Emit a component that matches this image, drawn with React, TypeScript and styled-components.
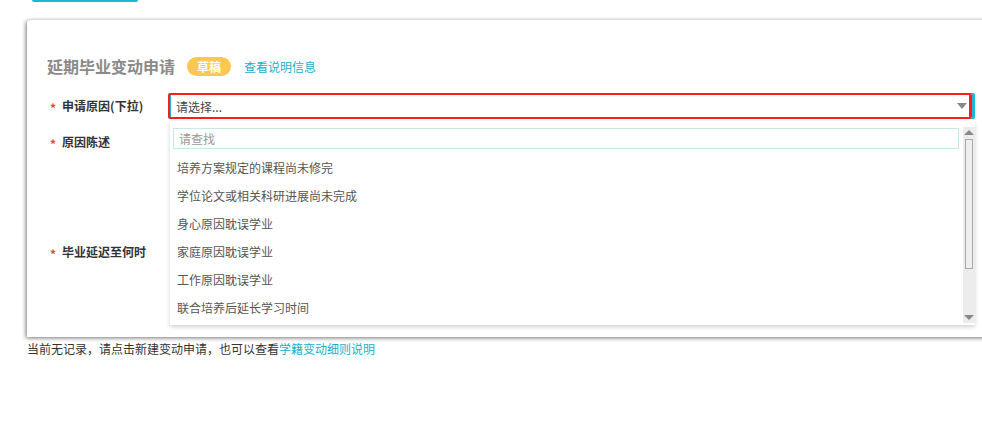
import React from 'react';
import styled, { createGlobalStyle } from 'styled-components';

const GlobalStyle = createGlobalStyle`
    html, body {
        margin: 0;
        padding: 0;
        background: #fff;
        overflow: hidden;
    }
    body {
        font-family: "Microsoft YaHei", "Noto Sans CJK SC", "Liberation Sans", sans-serif;
        font-size: 12px;
        color: #333;
    }
`;

const Page = styled.div`
    width: 982px;
    height: 446px;
    overflow: hidden;
`;

const TopButtonRow = styled.div`
    height: 2px;
    padding-left: 32px;
    overflow: hidden;
    display: flex;
    align-items: flex-end;
`;

const TopButton = styled.div`
    width: 106px;
    height: 30px;
    flex-shrink: 0;
    background: #18b7d3;
    border-radius: 0 0 2px 2px;
`;

const Card = styled.div`
    margin: 18px 0 0 27px;
    width: 1000px;
    background: #fff;
    border-radius: 3px 0 0 0;
    box-shadow: -1px 1px 4px rgba(0, 0, 0, 0.55);
    padding: 36px 0 72px 20px;
    box-sizing: border-box;
`;

const TitleRow = styled.div`
    display: flex;
    align-items: center;
    height: 20px;
`;

const Title = styled.h2`
    margin: 0;
    font-size: 16px;
    font-weight: bold;
    color: #8a8a8a;
    line-height: 20px;
`;

const Badge = styled.span`
    margin-left: 12px;
    width: 44px;
    height: 19px;
    border-radius: 10px;
    background: #fdc751;
    color: #fff;
    font-weight: bold;
    font-size: 12px;
    display: flex;
    align-items: center;
    justify-content: center;
`;

const Link = styled.a`
    color: #17b0cf;
    text-decoration: none;
    font-size: 12px;
`;

const TitleLink = styled(Link)`
    margin-left: 13px;
`;

const Form = styled.div`
    margin-top: 17px;
    display: flex;
    flex-direction: column;
    gap: 10px;
`;

const Row = styled.div<{ $h: number }>`
    display: flex;
    align-items: flex-start;
    height: ${p => p.$h}px;
    position: relative;
`;

const Label = styled.div`
    width: 121px;
    flex-shrink: 0;
    line-height: 26px;
    font-weight: bold;
    color: #333;
    padding-left: 3px;
    box-sizing: border-box;
`;

const Star = styled.span`
    color: #e0453a;
    font-size: 12px;
    margin-right: 6px;
    position: relative;
    top: 2px;
`;

const SelectWrap = styled.div`
    position: relative;
    width: 807px;
    height: 26px;
`;

const SelectBox = styled.div`
    height: 26px;
    box-sizing: border-box;
    border: 1px solid #1fb7d5;
    border-left-width: 3px;
    border-right-width: 3px;
    border-radius: 2px;
    display: flex;
    align-items: center;
    padding-left: 5px;
    color: #444;
    background: #fff;
`;

const Arrow = styled.span`
    margin-left: auto;
    margin-right: 5px;
    width: 0;
    height: 0;
    border-left: 5px solid transparent;
    border-right: 5px solid transparent;
    border-top: 6px solid #888;
`;

const Highlight = styled.div`
    position: absolute;
    left: 0;
    top: 0;
    width: 804px;
    height: 26px;
    box-sizing: border-box;
    border: 2px solid #ff1c1c;
    border-left-width: 2px;
    border-right-width: 3px;
    border-radius: 3px;
    pointer-events: none;
`;

const Dropdown = styled.div`
    position: absolute;
    left: 2px;
    top: 28px;
    width: 805px;
    height: 204px;
    background: #fff;
    box-shadow: 0 2px 4px rgba(0, 0, 0, 0.18);
    display: flex;
    z-index: 2;
`;

const DropdownBody = styled.div`
    flex: 1;
    padding: 7px 4px 0 3px;
`;

const Search = styled.div`
    height: 21px;
    box-sizing: border-box;
    border: 1px solid #c9e9e9;
    padding-left: 5px;
    line-height: 19px;
    color: #999;
    font-size: 12px;
`;

const OptionList = styled.ul`
    list-style: none;
    margin: 5px 0 0;
    padding: 0;
`;

const Option = styled.li`
    height: 28px;
    line-height: 28px;
    padding-left: 4px;
    color: #555;
`;

const Scrollbar = styled.div`
    width: 12px;
    margin: 6px 0 2px;
    background: #ececec;
    display: flex;
    flex-direction: column;
    align-items: center;
`;

const ScrollArrow = styled.span<{ $up?: boolean }>`
    width: 0;
    height: 0;
    margin: 3px 0;
    border-left: 5px solid transparent;
    border-right: 5px solid transparent;
    ${p => (p.$up ? 'border-bottom: 5px solid #888;' : 'border-top: 5px solid #888;')}
`;

const Thumb = styled.div`
    width: 6px;
    height: 128px;
    margin-top: 1px;
    border: 1px solid #aaa;
    background: #eee;
`;

const ScrollSpace = styled.div`
    flex: 1;
`;

const Footer = styled.div`
    margin: 4px 0 0 27px;
    line-height: 16px;
    color: #333;
`;

const options = [
    '培养方案规定的课程尚未修完',
    '学位论文或相关科研进展尚未完成',
    '身心原因耽误学业',
    '家庭原因耽误学业',
    '工作原因耽误学业',
    '联合培养后延长学习时间',
];

function App() {
    return (
        <Page>
            <GlobalStyle />
            <TopButtonRow>
                <TopButton />
            </TopButtonRow>
            <Card>
                <TitleRow>
                    <Title>延期毕业变动申请</Title>
                    <Badge>草稿</Badge>
                    <TitleLink href="#">查看说明信息</TitleLink>
                </TitleRow>
                <Form>
                    <Row $h={26}>
                        <Label><Star>*</Star>申请原因(下拉)</Label>
                        <SelectWrap>
                            <SelectBox>
                                请选择...
                                <Arrow />
                            </SelectBox>
                            <Highlight />
                            <Dropdown>
                                <DropdownBody>
                                    <Search>请查找</Search>
                                    <OptionList>
                                        {options.map(o => <Option key={o}>{o}</Option>)}
                                    </OptionList>
                                </DropdownBody>
                                <Scrollbar>
                                    <ScrollArrow $up />
                                    <Thumb />
                                    <ScrollSpace />
                                    <ScrollArrow />
                                </Scrollbar>
                            </Dropdown>
                        </SelectWrap>
                    </Row>
                    <Row $h={100}>
                        <Label><Star>*</Star>原因陈述</Label>
                    </Row>
                    <Row $h={26}>
                        <Label><Star>*</Star>毕业延迟至何时</Label>
                    </Row>
                </Form>
            </Card>
            <Footer>
                当前无记录，请点击新建变动申请，也可以查看<Link href="#">学籍变动细则说明</Link>
            </Footer>
        </Page>
    );
}

export default App;
